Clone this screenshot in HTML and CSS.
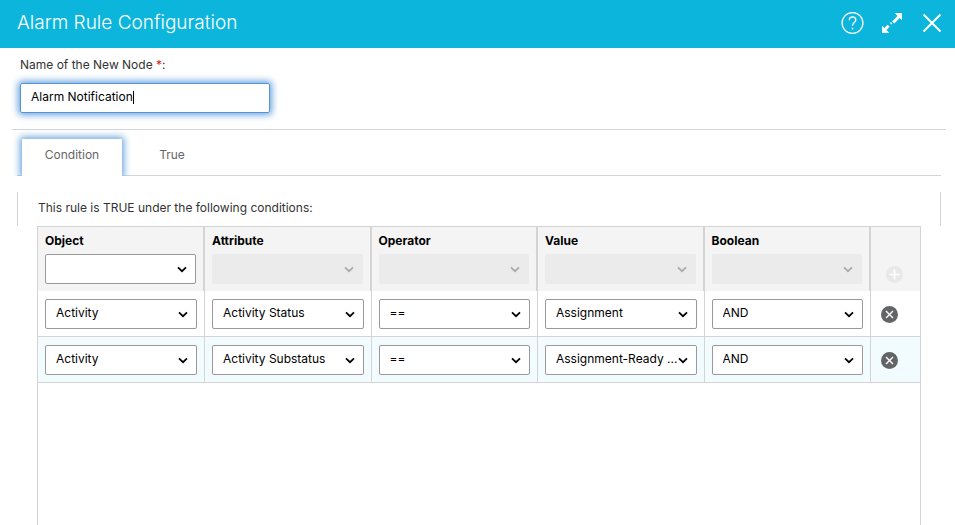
FILE: index.html
```html
<!DOCTYPE html>
<html lang="en">
<head>
<meta charset="utf-8">
<title>Alarm Rule Configuration</title>
<link rel="stylesheet" href="styles.css">
</head>
<body>
<svg class="defs" aria-hidden="true">
  <symbol id="chevron" viewBox="0 0 10 7"><path d="M1 1.3 5 5.2 9 1.3" fill="none" stroke="currentColor" stroke-width="1.7"/></symbol>
  <symbol id="remove" viewBox="0 0 17 17"><circle cx="8.5" cy="8.5" r="8.5" fill="#636466"/><path d="M5 5l7 7M12 5l-7 7" stroke="#fff" stroke-width="1.4"/></symbol>
</svg>
<header class="titlebar">
  <h1>Alarm Rule Configuration</h1>
  <div class="actions">
    <button type="button" aria-label="Help"><svg width="24" height="24" viewBox="0 0 24 24" fill="none" stroke="#fff" stroke-width="1.3"><circle cx="12.500" cy="12" r="10.400"/><path d="M9.300 9.200c0-2 1.200-3.200 3.200-3.200s3.300 1.200 3.300 3c0 2.600-3.300 2.600-3.300 5.800"/><path d="M12.500 16.700v1.700" stroke-width="1.500"/></svg></button>
    <button type="button" aria-label="Expand"><svg width="24" height="24" viewBox="0 0 24 24"><path d="M22 2v7.200L19.700 7 14.300 12.400 12.200 10.300 17.500 5 14.800 2zM2 22v-7.200l2.300 2.200 3.300-3.300 2.100 2.100-3.300 3.300L9.200 21.800z" fill="#fff"/><path d="M10.700 12.800l1-1" stroke="#fff" stroke-width="2"/></svg></button>
    <button type="button" aria-label="Close"><svg width="24" height="24" viewBox="0 0 24 24"><path d="M3.500 3.500l17 17M20.500 3.500l-17 17" stroke="#fff" stroke-width="2"/></svg></button>
  </div>
</header>
<main>
  <section class="name">
    <label for="node-name">Name of the New Node <span class="required">*</span>:</label>
    <div class="field"><input id="node-name" type="text" value="Alarm Notification"><span class="caret"></span></div>
  </section>
  <div class="tabs" role="tablist">
    <button type="button" role="tab" aria-selected="true" class="tab active">Condition</button>
    <button type="button" role="tab" aria-selected="false" class="tab">True</button>
  </div>
  <p class="intro">This rule is TRUE under the following conditions:</p>
  <div class="grid">
    <table>
      <colgroup><col class="first"><col><col><col><col><col class="narrow"></colgroup>
      <thead>
        <tr>
          <th><label for="new-object">Object</label><div class="pick"><select id="new-object"><option></option></select><svg><use href="#chevron"/></svg></div></th>
          <th><label for="new-attribute">Attribute</label><div class="pick off"><select id="new-attribute" disabled><option></option></select><svg><use href="#chevron"/></svg></div></th>
          <th><label for="new-operator">Operator</label><div class="pick off"><select id="new-operator" disabled><option></option></select><svg><use href="#chevron"/></svg></div></th>
          <th><label for="new-value">Value</label><div class="pick off"><select id="new-value" disabled><option></option></select><svg><use href="#chevron"/></svg></div></th>
          <th><label for="new-boolean">Boolean</label><div class="pick off"><select id="new-boolean" disabled><option></option></select><svg><use href="#chevron"/></svg></div></th>
          <th class="add"><button type="button" disabled aria-label="Add condition"><svg viewBox="0 0 17 17"><circle cx="8.5" cy="8.5" r="8.5" fill="#e8e8e8"/><path d="M3.500 8.500h10M8.500 3.500v10" stroke="#fff" stroke-width="1.700"/></svg></button></th>
        </tr>
      </thead>
      <tbody>
        <tr>
          <td><div class="pick"><select aria-label="Object"><option>Activity</option></select><svg><use href="#chevron"/></svg></div></td>
          <td><div class="pick"><select aria-label="Attribute"><option>Activity Status</option></select><svg><use href="#chevron"/></svg></div></td>
          <td><div class="pick"><select aria-label="Operator"><option>==</option></select><svg><use href="#chevron"/></svg></div></td>
          <td><div class="pick"><select aria-label="Value"><option>Assignment</option></select><svg><use href="#chevron"/></svg></div></td>
          <td><div class="pick"><select aria-label="Boolean"><option>AND</option></select><svg><use href="#chevron"/></svg></div></td>
          <td class="remove"><button type="button" aria-label="Remove condition"><svg><use href="#remove"/></svg></button></td>
        </tr>
        <tr>
          <td><div class="pick"><select aria-label="Object"><option>Activity</option></select><svg><use href="#chevron"/></svg></div></td>
          <td><div class="pick"><select aria-label="Attribute"><option>Activity Substatus</option></select><svg><use href="#chevron"/></svg></div></td>
          <td><div class="pick"><select aria-label="Operator"><option>==</option></select><svg><use href="#chevron"/></svg></div></td>
          <td><div class="pick"><select aria-label="Value"><option>Assignment-Ready ...</option></select><svg><use href="#chevron"/></svg></div></td>
          <td><div class="pick"><select aria-label="Boolean"><option>AND</option></select><svg><use href="#chevron"/></svg></div></td>
          <td class="remove"><button type="button" aria-label="Remove condition"><svg><use href="#remove"/></svg></button></td>
        </tr>
      </tbody>
    </table>
  </div>
</main>
</body>
</html>
```
FILE: styles.css
```css
* { box-sizing: border-box; }
body {
  margin: 0;
  height: 100vh;
  overflow: hidden;
  display: flex;
  flex-direction: column;
  background: #fff;
  color: #333;
  font: 12px/16px Inter, "Liberation Sans", sans-serif;
}
button, input, select { font: inherit; color: inherit; }
button { border: 0; padding: 0; background: none; }
svg { display: block; }
.defs { position: absolute; width: 0; height: 0; }

.titlebar {
  display: flex;
  align-items: center;
  justify-content: space-between;
  height: 48px;
  flex: none;
  padding: 0 11px 2px 17px;
  background: #0cb5dc;
  color: #fff;
}
h1 { margin: 0; font-size: 19px; line-height: 24px; font-weight: 300; }
.actions { display: flex; gap: 16px; }

main { flex: 1; min-height: 0; display: flex; flex-direction: column; }
.name {
  margin: 0 9px 0 12px;
  padding: 9px 8px 16px;
  border-bottom: 1px solid #d4d4d4;
}
.name label { display: block; margin-bottom: 10px; }
.required { color: #c22; }
.field {
  display: flex;
  align-items: center;
  width: 250px;
  height: 30px;
  padding: 0 10px 2px;
  border: 1px solid #4f94dc;
  border-radius: 2px;
  box-shadow: 0 0 7px 2px #6ba3dd;
  color: #000;
}
.field input { field-sizing: content; border: 0; padding: 0; outline: 0; background: none; }
.caret { width: 1px; height: 13px; background: #000; }

.tabs {
  display: flex;
  margin: 9px 14px 0 17px;
  padding-left: 5px;
  border-bottom: 1px solid #d4d4d4;
}
.tab { height: 36px; padding: 0 0 4px; width: 100px; color: #666; }
.active {
  height: 37px;
  margin-bottom: -1px;
  padding-bottom: 6px;
  background: #fff;
  box-shadow: 0 0 7px 2px #6ba3dd;
  clip-path: inset(-10px -10px 0);
}

.intro {
  margin: 16px 14px 0 17px;
  padding: 8px 20px 10px;
  border: solid #d4d4d4;
  border-width: 0 1px;
}
.grid {
  flex: 1;
  margin: 0 34px 0 37px;
  border: solid #d4d4d4;
  border-width: 1px 1px 0;
}
table { width: 100%; table-layout: fixed; border-spacing: 0; color: #000; }
.first { width: 167px; }
.narrow { width: 49px; }
th { height: 64px; padding: 6px 7px 7px; background: #f4f4f4; border-right: 2px solid #d4d4d4; text-align: left; }
th label { display: block; margin-bottom: 5px; font-weight: 700; }
td { height: 46px; padding: 8px 7px 7px; border: solid #d4d4d4; border-width: 0 1px 1px 0; }
th:last-child, td:last-child { border-right: 0; }
tbody tr:nth-child(even) { background: #f2fbfe; }
.pick { display: grid; align-items: center; }
.pick select, .pick svg { grid-area: 1 / 1; }
.pick select {
  appearance: none;
  width: 100%;
  height: 30px;
  padding: 0 10px 2px;
  border: 1px solid #999;
  border-radius: 2px;
  background: #fff;
  font-weight: 400;
}
.pick svg { width: 10px; height: 7px; justify-self: end; margin-right: 9px; pointer-events: none; }
.off select { border-color: #ebebeb; background: #ebebeb; opacity: 1; }
.off { color: #aaa; }
th.add { padding: 34px 0 0 15px; }
td.remove { padding: 5px 0 0 10px; }
.add svg, .remove svg { width: 17px; height: 17px; }
```
